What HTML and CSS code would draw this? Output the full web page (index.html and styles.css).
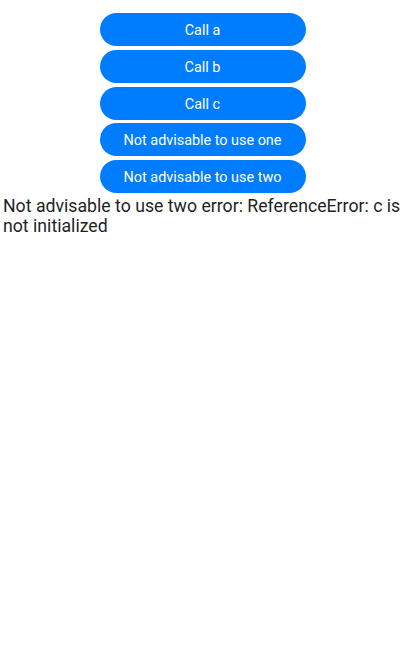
FILE: index.html
```html
<!DOCTYPE html>
<html>
<head>
<meta charset="utf-8">
<link rel="stylesheet" href="styles.css">
</head>
<body>
<div class="page">
  <div class="buttons">
    <button class="btn">Call a</button>
    <button class="btn">Call b</button>
    <button class="btn">Call c</button>
    <button class="btn">Not advisable to use one</button>
    <button class="btn">Not advisable to use two</button>
  </div>
  <div class="message">Not advisable to use two error: ReferenceError: c is not initialized</div>
</div>
</body>
</html>
```
FILE: styles.css
```css
html, body {
  margin: 0;
  padding: 0;
  background: #ffffff;
}
body {
  font-family: Roboto, "Noto Sans", sans-serif;
}
.page {
  width: 405px;
  padding-top: 13px;
}
.buttons {
  display: flex;
  flex-direction: column;
  align-items: center;
  gap: 3.75px;
}
.btn {
  width: 206px;
  height: 33px;
  border: none;
  border-radius: 17px;
  background: #007dff;
  color: #ffffff;
  font-family: Roboto, "Noto Sans", sans-serif;
  font-size: 14.4px;
  padding: 2px 0 0 0;
  margin: 0;
}
.message {
  margin-top: 3px;
  padding: 0 3px;
  font-size: 17.7px;
  line-height: 20px;
  color: #1f1f1f;
}
```
